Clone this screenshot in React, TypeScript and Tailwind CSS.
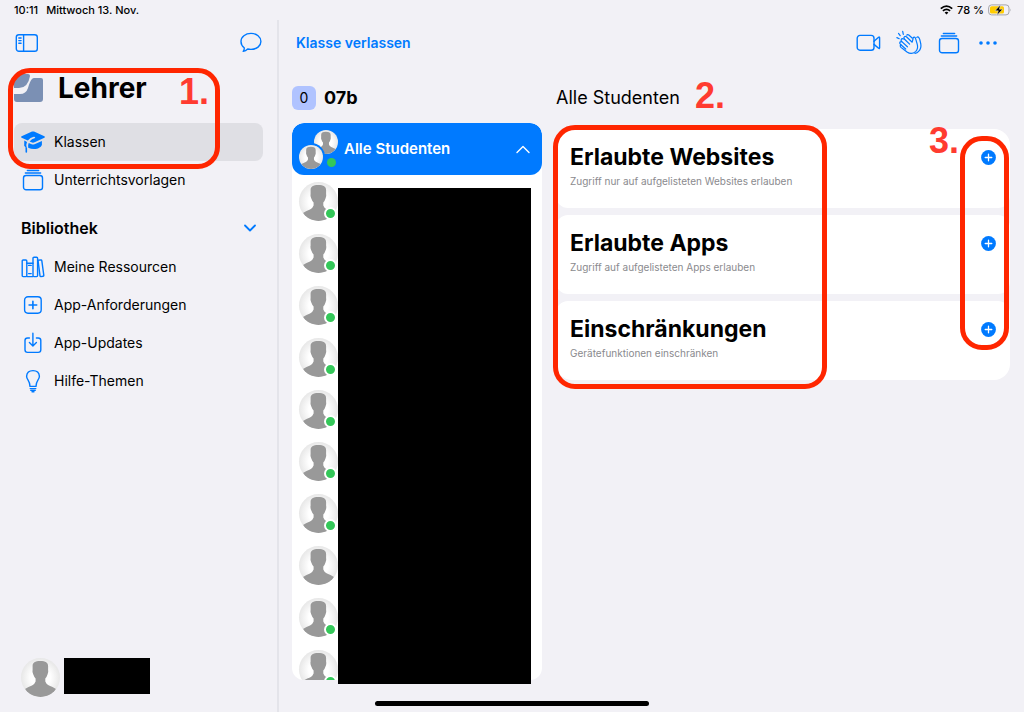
import type { ReactNode } from 'react'
import clsx from 'clsx'

const STUDENTS = [true, true, true, true, true, true, true, false, true, true]

const RULES = [
  { title: 'Erlaubte Websites', hint: 'Zugriff nur auf aufgelisteten Websites erlauben' },
  { title: 'Erlaubte Apps', hint: 'Zugriff auf aufgelisteten Apps erlauben' },
  { title: 'Einschränkungen', hint: 'Gerätefunktionen einschränken' },
]

function Icon({ w, h, children }: { w: number; h: number; children: ReactNode }) {
  return (
    <svg
      width={w}
      height={h}
      viewBox={`0 0 ${w} ${h}`}
      fill="none"
      stroke="#007aff"
      strokeWidth="1.4"
      strokeLinecap="round"
      strokeLinejoin="round"
      aria-hidden="true"
      className="shrink-0"
    >
      {children}
    </svg>
  )
}

function StackIcon() {
  return (
    <Icon w={22} h={22}>
      <rect x="1.5" y="6.5" width="19" height="14.3" rx="2.6" />
      <path d="M3.4 3.9h15.2M5.4 1.4h11.2" strokeWidth="1.5" />
    </Icon>
  )
}

function CapIcon() {
  return (
    <Icon w={26} h={24}>
      <g fill="#007aff" stroke="none">
        <path d="M12 1.6 Q13 1.2 14 1.6 L24.4 6.3 Q25.6 7 24.4 7.7 L14.6 12.3 Q13 13 11.4 12.3 L9.6 11.4 Q11.8 8.8 14.6 8.2 Q15.4 7.9 15.1 7.2 Q14.7 6.6 13.8 6.8 Q10.3 7.5 7.8 10.6 L1.6 7.7 Q.4 7 1.6 6.3 Z" />
        <path d="M8.7 13 L11.6 14.3 Q13 14.8 14.5 14.3 L21.9 11 V15 Q21.6 17 18 18.4 Q13 20 8.2 17.8 Q7.6 15.4 8.7 13 Z" />
        <path d="M4.3 10.6 L7 11.9 Q5.8 14.5 6.7 17.6 Q7.2 18 7.1 19 V22 Q7.1 22.8 6.3 22.8 Q5.5 22.8 5.5 22 V19 Q5.3 18 5.6 17.6 L4.2 15.8 Z" />
      </g>
    </Icon>
  )
}

function BooksIcon() {
  return (
    <Icon w={24} h={22}>
      <rect x="1.2" y="4" width="4.6" height="16.6" rx="1" />
      <path d="M5.8 7.2h6.2M5.8 20.6h6.2M7.6 9.4h2.6M7.6 17.6h2.6" />
      <rect x="12" y="1.2" width="4.6" height="19.4" rx="1" />
      <path d="M17 4.3l3-.4q.7 0 .8.7l2 14.8q0 .8-.7.9l-2.2.3q-.8 0-.9-.7z" />
    </Icon>
  )
}

function PlusBoxIcon() {
  return (
    <Icon w={20} h={20}>
      <rect x="1.6" y="1.8" width="16.6" height="16.4" rx="3.4" />
      <path d="M9.9 6.2v7.6M6.1 10h7.6" strokeWidth="1.6" />
    </Icon>
  )
}

function DownloadIcon() {
  return (
    <Icon w={20} h={22}>
      <path d="M6.4 6H4.6Q2 6 2 8.6v9.2q0 2.6 2.6 2.6h10.6q2.6 0 2.6-2.6V8.6Q17.8 6 15.2 6h-1.8" />
      <path d="M9.9 1.2v12.4M6.4 10.6l3.500 3.400 3.500-3.400" />
    </Icon>
  )
}

function BulbIcon() {
  return (
    <Icon w={16} h={24}>
      <path d="M5 17.4Q4.8 13.8 3.1 11.2Q1.6 9 1.6 7.2Q2 1.6 8 1.600T14.4 7.2Q14.4 9 12.9 11.2Q11.2 13.8 11 17.4Z" />
      <path d="M5.2 19.600h5.600M5.800 21.400h4.400M7 22.800h2" />
    </Icon>
  )
}

function SidebarIcon() {
  return (
    <Icon w={24} h={20}>
      <rect x="1.3" y="1.7" width="21" height="16.6" rx="2.6" />
      <path d="M8.6 1.7v16.6M3.8 5h2.3M3.8 7.6h2.3M3.8 10.2h2.3" />
    </Icon>
  )
}

function ChatIcon() {
  return (
    <Icon w={24} h={22}>
      <path d="M12 1.4c5.6 0 9.9 3.5 9.9 8s-4.3 8-9.9 8q-1.8 0-3.3-.4-2 2-4.5 2.4 1.300-1.700 1-3.700Q2 13.300 2 9.400c0-4.500 4.400-8 10-8z" />
    </Icon>
  )
}

function VideoIcon() {
  return (
    <Icon w={26} h={18}>
      <rect x="1.2" y="1.4" width="16.8" height="14.8" rx="2.8" />
      <path d="M18 7.2l4.6-3.9q1-.7 1 .5v10q0 1.200-1 .5L18 10.400" />
    </Icon>
  )
}

function ClapIcon() {
  return (
    <Icon w={28} h={26}>
      <g strokeWidth="1.2">
        <path d="M.9 7.600l2.300 1.100M2.500 3.400l1.700 2.300M6.700 1.400l.6 2.900" />
        <path d="M16.200 12.200L10.400 6.800Q9.200 5.900 8.300 6.800T8.300 9L6.900 8.800Q5.700 8.500 5.200 9.500T5.800 11.600Q4.200 11.300 3.800 12.500T4.900 14.800Q4 15.200 4.300 16.300T6.500 18.600L11 22Q15.500 25 19.600 21.600Q22.600 18.800 21.200 14.200L19.600 8.600Q19.200 7 18 7.200T17 9.200Z" />
        <path d="M8.300 9l5.300 5.100M5.800 11.600l5.600 5.200M4.900 14.800l4.800 4.200" />
        <path d="M10.800 5.200Q11.600 4 12.800 5L16.400 8.200M20.800 7.400Q21.800 6.400 22.800 7.600Q23.400 8.300 23.800 9.600L24.800 14Q25.600 18.600 22.600 21.400Q21.200 23 19 23.400" />
      </g>
    </Icon>
  )
}

function DotsIcon() {
  return (
    <Icon w={20} h={6}>
      <g fill="#007aff" stroke="none">
        <circle cx="3" cy="3" r="1.8" />
        <circle cx="10" cy="3" r="1.8" />
        <circle cx="17" cy="3" r="1.8" />
      </g>
    </Icon>
  )
}

function Avatar({ className }: { className: string }) {
  return (
    <div className={clsx('shrink-0 overflow-hidden rounded-full bg-[radial-gradient(circle,#ffffff_35%,#d4d4d4_100%)]', className)}>
      <svg viewBox="0 0 39 39" className="block size-full" fill="#999999" aria-hidden="true">
        <path d="M19.300 3C14 3 11.600 4.800 11.600 8V11.500Q11 14 12.300 16.400Q13.200 19 14.600 20.500V23.500Q13.600 26.300 11 27.500Q7.500 28.600 4 31C7 36.500 13 39 19.500 39S32 36.500 35 31Q31.500 28.600 28 27.500Q25.200 26.300 24.300 23.500V20.500Q25.700 19 26.500 16.400Q27.700 14 27.100 11.500V8C27.100 4.800 24.600 3 19.300 3Z" />
      </svg>
    </div>
  )
}

function NavItem({ icon, label, active }: { icon: ReactNode; label: string; active?: boolean }) {
  return (
    <a
      href="#"
      aria-current={active ? 'page' : undefined}
      className={clsx('flex h-[38px] items-center gap-2 rounded-lg pl-1.5 text-sm', active && 'bg-[#dfdfe4]')}
    >
      <span className="flex w-[26px] shrink-0 justify-center">{icon}</span>
      {label}
    </a>
  )
}

function StepNumber({ n, className }: { n: number; className: string }) {
  return (
    <span className={clsx("absolute font-['Liberation_Sans',sans-serif] text-4xl leading-10 font-bold text-[#ff3b30]", className)}>
      {n}.
    </span>
  )
}

function Sidebar() {
  return (
    <aside className="flex w-[279px] shrink-0 flex-col border-r-2 border-[#e4e4ea] px-3.5">
      <div className="flex h-[46px] items-center justify-between">
        <button aria-label="Seitenleiste" className="ml-px"><SidebarIcon /></button>
        <button aria-label="Nachrichten"><ChatIcon /></button>
      </div>

      {/* first step: title plus the classes entry */}
      <div className="relative mt-0.5">
        <div className="flex h-[55px] items-start gap-3.5 pt-0.5">
          <svg width="30" height="28" viewBox="0 0 30 28" fill="#7b90b4" className="mt-1" aria-hidden="true">
            <path d="M4 0H14Q16 0 16 2Q14 14 5 14H0V4Q0 0 4 0Z" />
            <path d="M20 4H27Q29 4 29 6V25Q29 28 26 28H3Q0 28 0 25V20H6Q12 20 14 14Q16 7 18 5Q19 4 20 4Z" />
          </svg>
          <h1 className="text-[28px] leading-9 font-bold">Lehrer</h1>
        </div>
        <NavItem icon={<CapIcon />} label="Klassen" active />
        <div className="pointer-events-none absolute top-0 -left-1.5 h-[101px] w-[212px] rounded-[22px] border-[5px] border-[#ff2600]" />
        <StepNumber n={1} className="top-1 left-[165px]" />
      </div>
      <NavItem icon={<StackIcon />} label="Unterrichtsvorlagen" />

      <button className="mt-2.5 flex h-[38px] items-center justify-between pr-1.5 pl-[7px] text-base font-semibold">
        Bibliothek
        <Icon w={14} h={10}>
          <path d="M2 2.500l5 5 5-5" strokeWidth="1.8" />
        </Icon>
      </button>
      <nav className="mt-px">
        <NavItem icon={<BooksIcon />} label="Meine Ressourcen" />
        <NavItem icon={<PlusBoxIcon />} label="App-Anforderungen" />
        <NavItem icon={<DownloadIcon />} label="App-Updates" />
        <NavItem icon={<BulbIcon />} label="Hilfe-Themen" />
      </nav>

      <div className="mt-auto flex gap-1 pb-[15px] pl-[7px]">
        <Avatar className="size-[39px]" />
        <div className="h-9 w-[86px] bg-black" />
      </div>
    </aside>
  )
}

function ClassList() {
  return (
    <section className="flex min-h-0 w-[250px] shrink-0 flex-col">
      <div className="flex h-[50px] items-center gap-2">
        <span className="flex size-6 items-center justify-center rounded-md bg-[#b0c3ff] text-sm">0</span>
        <h2 className="text-lg font-bold">07b</h2>
      </div>
      <div className="relative mb-8 min-h-0 flex-1">
        <div className="h-full overflow-hidden rounded-xl bg-white">
          <button className="flex h-[52px] w-full items-center rounded-xl bg-[#007aff] pr-3 pl-[7px] text-[15px] font-semibold text-white">
            <span className="relative mr-1.5 size-[39px]">
              <Avatar className="absolute top-0 right-0 size-6" />
              <Avatar className="absolute bottom-0 left-0 size-6 ring-2 ring-[#007aff]" />
              <span className="absolute right-0.5 bottom-0.5 size-[9px] rounded-full bg-[#34c759]" />
            </span>
            Alle Studenten
            <svg width="14" height="10" viewBox="0 0 14 10" fill="none" stroke="#fff" strokeWidth="1.4" strokeLinecap="round" strokeLinejoin="round" className="ml-auto" aria-hidden="true">
              <path d="M1 8.500l6-6 6 6" />
            </svg>
          </button>
          <ul>
            {STUDENTS.map((online, i) => (
              <li key={i} className="flex h-[52px] items-center pl-[7px]">
                <div className="relative">
                  <Avatar className="size-[39px]" />
                  {online && <span className="absolute right-px bottom-px size-[13px] rounded-full border-2 border-white bg-[#34c759]" />}
                </div>
              </li>
            ))}
          </ul>
        </div>
        {/* names blacked out */}
        <div className="absolute top-[65px] right-[11px] -bottom-1 left-[46px] bg-black" />
      </div>
    </section>
  )
}

function Rules() {
  return (
    <section className="min-w-0 flex-1">
      <div className="relative flex h-[50px] items-center">
        <h2 className="text-lg">Alle Studenten</h2>
        <StepNumber n={2} className="top-[3px] left-[139px]" />
      </div>
      <div className="relative mt-1.5">
        <div className="flex flex-col gap-[7px] overflow-hidden rounded-2xl">
          {RULES.map(rule => (
            <div key={rule.title} className="flex h-[79px] items-start justify-between rounded-xl bg-white pt-3 pr-3.5 pl-3.5">
              <div>
                <h3 className="text-[23px] leading-8 font-bold">{rule.title}</h3>
                <p className="text-[10px] leading-4 text-[#8a8a8e]">{rule.hint}</p>
              </div>
              <button aria-label={`${rule.title} hinzufügen`} className="mt-[9px]">
                <svg width="15" height="15" viewBox="0 0 15 15" fill="none" aria-hidden="true">
                  <circle cx="7.5" cy="7.5" r="7.4" fill="#007aff" />
                  <path d="M7.500 4.200v6.600M4.200 7.500h6.600" stroke="#fff" strokeWidth="1.3" strokeLinecap="round" />
                </svg>
              </button>
            </div>
          ))}
        </div>
        <div className="pointer-events-none absolute -top-1 -left-[3px] h-[264px] w-[274px] rounded-[22px] border-[5px] border-[#ff2600]" />
        <div className="pointer-events-none absolute top-[7px] right-px h-[214px] w-[49px] rounded-[22px] border-[5px] border-[#ff2600]" />
        <StepNumber n={3} className="-top-2 right-[51px]" />
      </div>
    </section>
  )
}

export default function App() {
  return (
    <div className="relative flex h-screen bg-[#f2f1f6] font-['Inter',sans-serif] text-black">
      <div className="flex flex-1 pt-5">
        <Sidebar />
        <main className="flex min-w-0 flex-1 flex-col pr-3.5 pl-[13px]">
          <header className="flex h-[45px] shrink-0 items-center justify-between pr-3 pl-1">
            <button className="text-sm font-semibold text-[#007aff]">Klasse verlassen</button>
            <div className="flex items-center gap-3.5">
              <button aria-label="Video"><VideoIcon /></button>
              <button aria-label="Applaus"><ClapIcon /></button>
              <button aria-label="Vorlagen"><StackIcon /></button>
              <button aria-label="Mehr" className="ml-1"><DotsIcon /></button>
            </div>
          </header>
          <div className="flex min-h-0 flex-1 gap-3.5 pt-2">
            <ClassList />
            <Rules />
          </div>
        </main>
      </div>

      {/* system status bar and home indicator float above the app */}
      <div className="absolute inset-x-0 top-0 flex h-5 items-center justify-between pr-3 pl-3.5 text-[11px] font-medium">
        <div className="flex gap-2">
          <span>10:11</span>
          <span>Mittwoch 13. Nov.</span>
        </div>
        <div className="flex items-center gap-1">
          <svg width="13" height="10" viewBox="0 0 13 10" fill="none" stroke="#000" strokeWidth="1.8" aria-hidden="true">
            <path d="M.8 3.600q5.700-5 11.400 0M2.900 5.900q3.600-3 7.200 0" />
            <path d="M4.600 7.600q1.900-1.500 3.800 0L6.500 9.600z" fill="#000" stroke="none" />
          </svg>
          <span>78 %</span>
          <svg width="24" height="12" viewBox="0 0 24 12" aria-hidden="true">
            <rect x=".6" y=".9" width="20.4" height="10" rx="3" fill="none" stroke="#a5a5aa" />
            <rect x="2" y="2.3" width="14" height="7.2" rx="1.6" fill="#ffcc00" />
            <path d="M22 4.400q1.300 1.500 0 3z" fill="#a5a5aa" />
            <path d="M12.500.8L7 6.800h3.300L8.800 11.400l6-6.200h-3.400z" fill="#000" stroke="#f2f1f6" strokeWidth=".5" />
          </svg>
        </div>
      </div>
      <div className="absolute bottom-1.5 left-1/2 h-[5px] w-[274px] -translate-x-1/2 rounded-full bg-black" />
    </div>
  )
}
